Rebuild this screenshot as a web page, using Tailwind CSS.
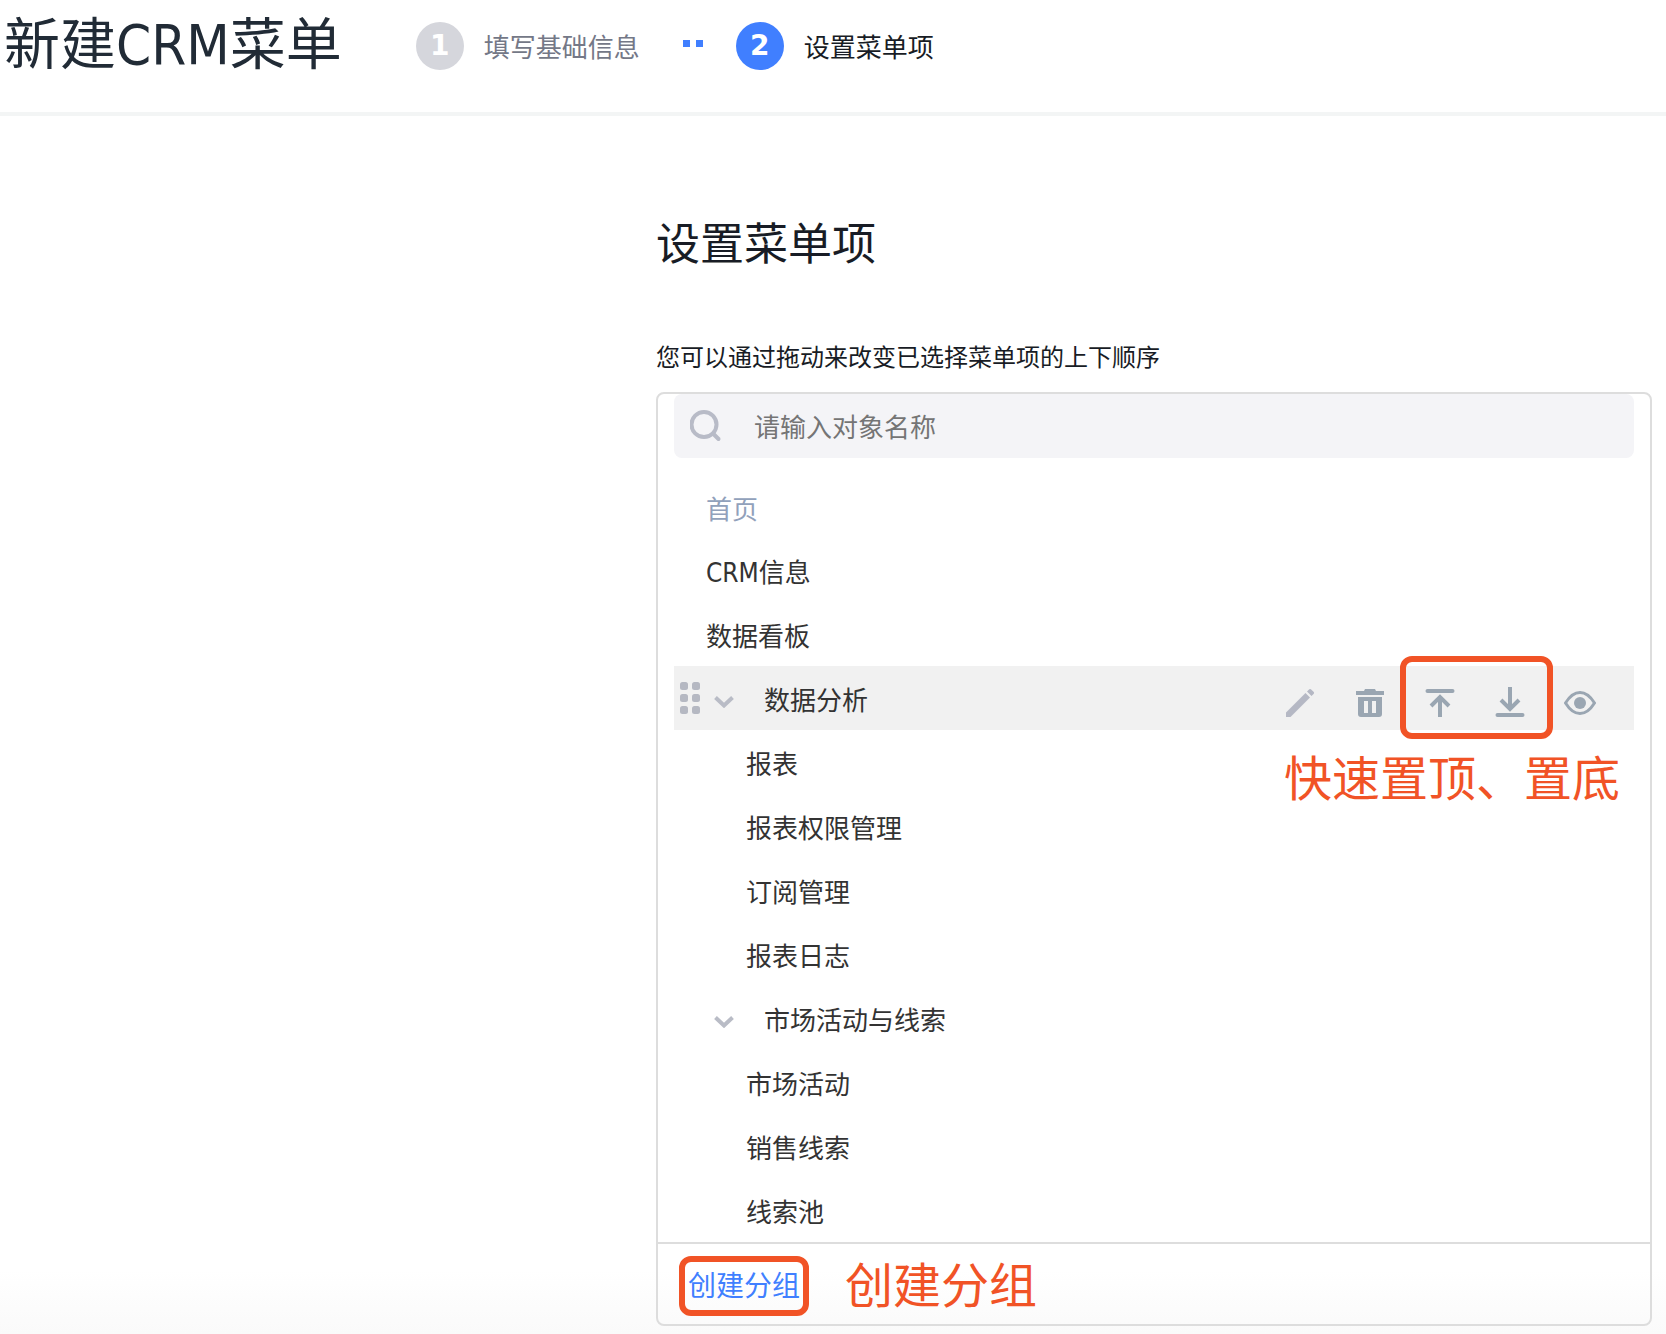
<!DOCTYPE html>
<html lang="zh-CN">
<head>
<meta charset="utf-8">
<meta name="viewport" content="width=device-width, initial-scale=1">
<title>新建CRM菜单</title>
<script src="https://cdn.jsdelivr.net/npm/@tailwindcss/browser@4"></script>
</head>
<body class="flex min-h-screen flex-col bg-white bg-linear-to-t from-[#fafafa] to-white to-[64px] font-['DejaVu_Sans_Condensed','Noto_Sans_CJK_SC',sans-serif] text-[26px] leading-8 text-[#333]">

<header class="flex h-[116px] items-start border-b-4 border-[#f3f5f5] pl-1">
  <h1 class="mr-[74px] text-[56px] leading-[90px] text-[#212b36]">新建CRM菜单</h1>
  <ol class="flex items-center pt-[22px]">
    <li class="flex items-center gap-5 text-[#747887]">
      <span class="flex size-12 items-center justify-center rounded-full bg-[#d5d6dc] font-['DejaVu_Sans',sans-serif] text-[28px] font-bold text-white">1</span>
      <span class="pt-[3px]">填写基础信息</span>
    </li>
    <li class="flex gap-[6px] pr-[33px] pb-[5px] pl-[43px]" aria-hidden="true">
      <span class="size-[7px] bg-[#407fff]"></span>
      <span class="size-[7px] bg-[#407fff]"></span>
    </li>
    <li class="flex items-center gap-5 text-[#181c25]" aria-current="step">
      <span class="flex size-12 items-center justify-center rounded-full bg-[#407fff] font-['DejaVu_Sans',sans-serif] text-[28px] font-bold text-white">2</span>
      <span class="pt-[3px]">设置菜单项</span>
    </li>
  </ol>
</header>

<main class="pt-[97px] pr-[14px] pb-2 pl-[656px] text-[#181c25]">
  <h2 class="text-[44px] leading-[64px]">设置菜单项</h2>
  <p class="mt-[65px] mb-[18px] text-[24px]">您可以通过拖动来改变已选择菜单项的上下顺序</p>

  <section class="rounded-lg border-2 border-[#ddd]">
    <div class="px-4">
      <label class="flex h-16 items-center gap-[32px] rounded-lg bg-[#f4f4f7] pl-4">
        <svg class="size-8 shrink-0" viewBox="0 0 32 32" fill="none" stroke="#b8bbc7" stroke-width="4" stroke-linecap="round" role="img" aria-label="搜索"><circle cx="14" cy="14.500" r="12.500"/><path d="M23 23.500l5.500 5.500"/></svg>
        <input type="text" placeholder="请输入对象名称" class="h-full min-w-0 flex-1 bg-transparent pt-[3px] outline-none placeholder:text-[#757575]">
      </label>

      <ul class="mt-4 text-[#333]">
        <li class="flex h-16 items-center pt-2 pl-8 text-[#91a1bb]">首页</li>
        <li class="flex h-16 items-center pt-[6px] pl-8">CRM信息</li>
        <li class="flex h-16 items-center pt-[6px] pl-8">数据看板</li>
        <li class="relative flex h-16 items-center bg-[#f1f1f1] pt-[6px] pr-[38px] pl-[6px]">
          <svg class="mb-[6px] h-8 w-5" viewBox="0 0 20 32" fill="#b5b8c2" role="img" aria-label="拖动"><rect width="8" height="8" rx="2.500"/><rect x="12" width="8" height="8" rx="2.500"/><rect y="12" width="8" height="8" rx="2.500"/><rect x="12" y="12" width="8" height="8" rx="2.500"/><rect y="24" width="8" height="8" rx="2.500"/><rect x="12" y="24" width="8" height="8" rx="2.500"/></svg>
          <button type="button" aria-label="收起" class="ml-[14px] flex h-8 w-5 items-center justify-center pt-[2px]">
            <svg class="h-3 w-5" viewBox="0 0 20 12" fill="none" stroke="#b9bcc6" stroke-width="4"><path d="M1.500 1.500L10 9.500l8.500-8"/></svg>
          </button>
          <span class="ml-[30px] flex-1">数据分析</span>
          <div class="flex gap-[38px] pt-1 text-[#9aa6b2]">
            <button type="button" aria-label="编辑" class="size-8">
              <svg class="size-8" viewBox="0 0 32 32" fill="#b5b8c4"><path d="M2 25.500L21.500 6l4.500 4.500L6.500 30H2zM23 4.500l2.300-2.300q.8-.6 1.600 0l2.900 2.900q.6.800 0 1.600L27.500 9z"/></svg>
            </button>
            <button type="button" aria-label="删除" class="size-8">
              <svg class="size-8" viewBox="0 0 32 32" fill="currentColor"><path d="M11 2h10l1 2h8v4H2V4h8z"/><path fill-rule="evenodd" d="M4 10h24v17q0 3-3 3H7q-3 0-3-3zM10 14v12h4V14zm8 0v12h4V14z"/></svg>
            </button>
            <div class="relative flex gap-[38px]">
              <button type="button" aria-label="置顶" class="size-8">
                <svg class="size-8" viewBox="0 0 32 32" fill="none" stroke="currentColor" stroke-width="4"><path d="M3.500 4h25" stroke-linecap="round"/><path d="M16 30V11M7 19l9-9 9 9"/></svg>
              </button>
              <button type="button" aria-label="置底" class="size-8">
                <svg class="size-8" viewBox="0 0 32 32" fill="none" stroke="currentColor" stroke-width="4"><path d="M3.500 28h25" stroke-linecap="round"/><path d="M16 0v21M7 13l9 9 9-9"/></svg>
              </button>
              <div class="pointer-events-none absolute -top-[31px] -right-[27px] -bottom-5 -left-6 rounded-xl border-6 border-[#f15326]"></div>
            </div>
            <button type="button" aria-label="显示" class="size-8">
              <svg class="size-8" viewBox="0 0 32 32"><path d="M1.500 16Q8 5.500 16 5.500T30.500 16Q24 26.500 16 26.500T1.500 16z" fill="none" stroke="currentColor" stroke-width="3"/><circle cx="16" cy="16" r="6" fill="currentColor"/></svg>
            </button>
          </div>
          <p class="pointer-events-none absolute top-full right-[14px] pt-[17px] text-[48px] leading-[64px] whitespace-nowrap text-[#f15326]">快速置顶、置底</p>
        </li>
        <li class="flex h-16 items-center pt-[6px] pl-[72px]">报表</li>
        <li class="flex h-16 items-center pt-[6px] pl-[72px]">报表权限管理</li>
        <li class="flex h-16 items-center pt-[6px] pl-[72px]">订阅管理</li>
        <li class="flex h-16 items-center pt-[6px] pl-[72px]">报表日志</li>
        <li class="flex h-16 items-center pt-[6px] pl-[40px]">
          <button type="button" aria-label="收起" class="flex h-8 w-5 items-center justify-center pt-[2px]">
            <svg class="h-3 w-5" viewBox="0 0 20 12" fill="none" stroke="#b9bcc6" stroke-width="4"><path d="M1.500 1.500L10 9.500l8.500-8"/></svg>
          </button>
          <span class="ml-[30px]">市场活动与线索</span>
        </li>
        <li class="flex h-16 items-center pt-[6px] pl-[72px]">市场活动</li>
        <li class="flex h-16 items-center pt-[6px] pl-[72px]">销售线索</li>
        <li class="flex h-16 items-center pt-[6px] pl-[72px]">线索池</li>
      </ul>
    </div>

    <footer class="flex h-[82px] items-center gap-[36px] border-t-2 border-[#ddd] pt-1 pl-[21px]">
      <button type="button" class="h-[60px] rounded-xl border-6 border-[#f15326] px-[3px] pt-[2px] text-[28px] whitespace-nowrap text-[#407fff]">创建分组</button>
      <p class="text-[48px] leading-[64px] text-[#f15326]">创建分组</p>
    </footer>
  </section>
</main>
</body>
</html>
